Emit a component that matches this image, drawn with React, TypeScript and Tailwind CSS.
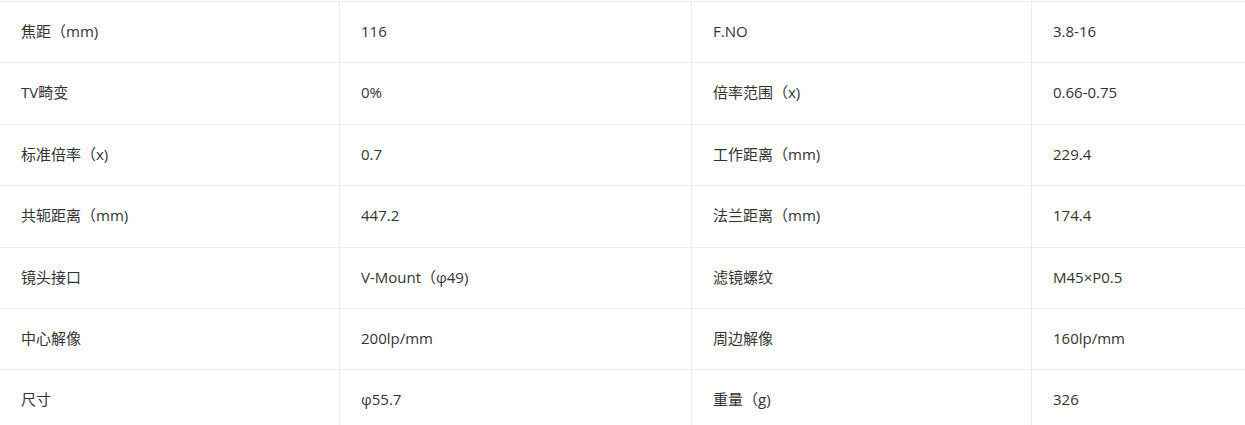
const specs: [string, string, string, string][] = [
  ["焦距（mm)", "116", "F.NO", "3.8-16"],
  ["TV畸变", "0%", "倍率范围（x)", "0.66-0.75"],
  ["标准倍率（x)", "0.7", "工作距离（mm)", "229.4"],
  ["共轭距离（mm)", "447.2", "法兰距离（mm)", "174.4"],
  ["镜头接口", "V-Mount（φ49)", "滤镜螺纹", "M45×P0.5"],
  ["中心解像", "200lp/mm", "周边解像", "160lp/mm"],
  ["尺寸", "φ55.7", "重量（g)", "326"],
];

export default function App() {
  return (
    <div
      className="bg-white pt-px text-[15px] text-[#333]"
      style={{ fontFamily: '"Open Sans", "Noto Sans CJK SC", sans-serif' }}
    >
      <div className="border-b border-[#ececec]">
        {specs.map((row) => (
          <div
            key={row[0]}
            className="grid h-[61.4px] grid-cols-[340px_352px_340px_1fr] border-t border-[#ececec]"
          >
            {row.map((cell, i) => (
              <div
                key={i}
                className={
                  i < 3
                    ? "flex items-center border-r border-[#ececec] pb-[2px] pl-[21px]"
                    : "flex items-center pb-[2px] pl-[21px]"
                }
              >
                {cell}
              </div>
            ))}
          </div>
        ))}
      </div>
    </div>
  );
}
